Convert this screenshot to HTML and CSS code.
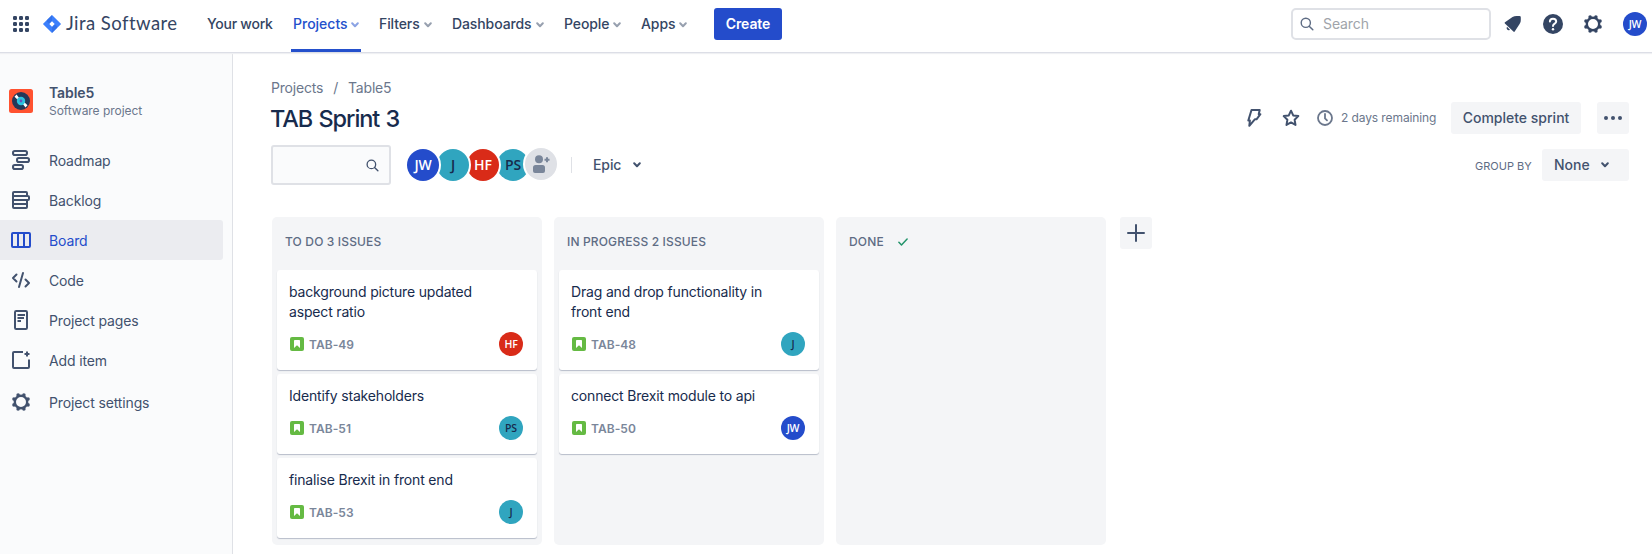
FILE: index.html
```html
<!DOCTYPE html>
<html lang="en">
<head>
<meta charset="utf-8">
<title>TAB Sprint 3 - Jira Software</title>
<link rel="stylesheet" href="styles.css">
</head>
<body>
<svg class="defs" width="0" height="0">
  <symbol id="chev" viewBox="0 0 8 6"><path d="M1.2 1.3 4 4.2l2.8-2.9" fill="none" stroke="currentColor" stroke-width="2" stroke-linecap="round" stroke-linejoin="round"/></symbol>
  <symbol id="lens" viewBox="0 0 14 14"><circle cx="5.8" cy="5.8" r="4.6" fill="none" stroke="currentColor" stroke-width="1.4"/><path d="m9.2 9.2 3.6 3.5" stroke="currentColor" stroke-width="1.5" stroke-linecap="round"/></symbol>
  <symbol id="gear" viewBox="0 0 18 18"><circle cx="9" cy="9" r="6.200" fill="none" stroke="currentColor" stroke-width="2.400"/><g fill="currentColor"><circle cx="6.100" cy="2" r="1.800"/><circle cx="11.900" cy="2" r="1.800"/><circle cx="16" cy="6.100" r="1.800"/><circle cx="16" cy="11.900" r="1.800"/><circle cx="11.900" cy="16" r="1.800"/><circle cx="6.100" cy="16" r="1.800"/><circle cx="2" cy="11.900" r="1.800"/><circle cx="2" cy="6.100" r="1.800"/></g></symbol>
  <symbol id="story" viewBox="0 0 14 14"><rect width="14" height="14" rx="2" fill="#65ba43"/><path d="M4 4.1c0-.6.4-1 1-1h4c.6 0 1 .4 1 1V11L7 8.2 4 11z" fill="#fff"/></symbol>
</svg>

<header class="topbar">
  <svg class="switcher" width="16" height="16" viewBox="0 0 16 16" fill="#344563"><rect width="4" height="4" rx="1.3"/><rect x="6" width="4" height="4" rx="1.3"/><rect x="12" width="4" height="4" rx="1.3"/><rect y="6" width="4" height="4" rx="1.3"/><rect x="6" y="6" width="4" height="4" rx="1.3"/><rect x="12" y="6" width="4" height="4" rx="1.3"/><rect y="12" width="4" height="4" rx="1.3"/><rect x="6" y="12" width="4" height="4" rx="1.3"/><rect x="12" y="12" width="4" height="4" rx="1.3"/></svg>
  <svg class="logo" width="18" height="18" viewBox="0 0 18 18"><path d="M9 0 17.6 8.4a.8.8 0 0 1 0 1.2L9 18 .4 9.6a.8.8 0 0 1 0-1.2z" fill="#3b7ffc"/><path d="M9 0v6L6.2 8.800 4 6.500Q3.500 5.400 4.500 4.400z" fill="#2c68e0" opacity=".6"/><path d="M9 18v-6l2.800-2.800L14 11.500Q14.500 12.600 13.500 13.600z" fill="#2c68e0" opacity=".6"/><path d="m9 6.300 2.700 2.700L9 11.700 6.300 9z" fill="#fff"/></svg>
  <span class="brand">Jira Software</span>
  <nav class="nav">
    <a class="nav-item w-work">Your work</a>
    <a class="nav-item active w-projects">Projects<svg class="chev"><use href="#chev"/></svg></a>
    <a class="nav-item w-filters">Filters<svg class="chev"><use href="#chev"/></svg></a>
    <a class="nav-item w-dash">Dashboards<svg class="chev"><use href="#chev"/></svg></a>
    <a class="nav-item w-people">People<svg class="chev"><use href="#chev"/></svg></a>
    <a class="nav-item w-apps">Apps<svg class="chev"><use href="#chev"/></svg></a>
  </nav>
  <button class="create">Create</button>
  <div class="search"><svg width="14" height="14"><use href="#lens"/></svg>Search</div>
  <svg class="bell" width="18" height="18" viewBox="0 0 18 18" fill="#344563"><path d="M1 7.200 8.500 2Q10.500.9 13 1h2.500q1.300 0 1.300 1.400V5q.1 2.200-1.200 4L10.700 16.500q-.6.800-1.300.1L.9 8.500q-.7-.7.1-1.300z"/><path d="M3 11.700 6 14.700q-1.600 1.100-2.800-.1-1.200-1.300-.2-2.900z"/></svg>
  <svg class="help" width="20" height="20" viewBox="0 0 20 20"><circle cx="10" cy="10" r="10" fill="#344563"/><path d="M6.900 7.600C6.900 5.700 8.200 4.700 10 4.700s3.200 1.100 3.200 2.800c0 2.300-3.200 2.100-3.200 4.600" fill="none" stroke="#fff" stroke-width="2" stroke-linecap="round"/><circle cx="10" cy="15.200" r="1.200" fill="#fff"/></svg>
  <svg class="gear" width="18" height="18"><use href="#gear"/></svg>
  <span class="avatar blue">JW</span>
</header>

<div class="layout">
  <aside class="sidebar">
    <div class="project">
      <svg width="24" height="24" viewBox="0 0 24 24"><rect width="24" height="24" rx="2.500" fill="#ff5230"/><circle cx="12" cy="12" r="9" fill="#253858"/><path d="m5.500 7.800 2-2.300 3.500 4.500-1.500 1.500zM18.500 16.200l-2 2.300L13 14l1.500-1.500z" fill="#fff"/><circle cx="12" cy="12" r="4.200" fill="#2cc3de"/><circle cx="12" cy="12" r="1.400" fill="#6554c0"/></svg>
      <div class="project-text"><strong>Table5</strong><span>Software project</span></div>
    </div>
    <nav class="menu">
      <a class="menu-item"><svg width="20" height="22" viewBox="0 0 20 22" fill="none" stroke="currentColor" stroke-width="2"><rect x="2" y="2" width="14" height="4" rx="1.800"/><rect x="6" y="9" width="12" height="4" rx="1.800"/><rect x="2" y="16" width="10" height="4" rx="1.800"/></svg>Roadmap</a>
      <a class="menu-item"><svg width="20" height="20" viewBox="0 0 20 20" fill="none" stroke="currentColor" stroke-width="2"><path d="M16 6V3q0-1-1-1H3Q2 2 2 3v14q0 1 1 1h12q1 0 1-1v-7M2 6h15q1 0 1 1v2q0 1-1 1H2V6zM2 14h14"/></svg>Backlog</a>
      <a class="menu-item selected"><svg width="20" height="20" viewBox="0 0 20 20" fill="none" stroke="currentColor" stroke-width="2"><rect x="1" y="3" width="18" height="14" rx="1"/><path d="M7 3v14M13 3v14"/></svg>Board</a>
      <a class="menu-item"><svg width="20" height="20" viewBox="0 0 20 20" fill="none" stroke="currentColor" stroke-width="2" stroke-linecap="round" stroke-linejoin="round"><path d="M5.500 4.500 2 8l3.500 3.500M14.500 9.500 18 13l-3.500 3.500M12 3 8 17" /></svg>Code</a>
      <a class="menu-item"><svg width="20" height="20" viewBox="0 0 20 20" fill="none" stroke="currentColor" stroke-width="2"><rect x="4" y="1" width="12" height="18" rx="1.200"/><path d="M6.500 5h7.500M6.500 8h6.500M6.500 11h3.500" stroke-width="1.900"/></svg>Project pages</a>
      <a class="menu-item"><svg width="20" height="20" viewBox="0 0 20 20" fill="none" stroke="currentColor" stroke-width="2"><path d="M12 2H3Q2 2 2 3v14q0 1 1 1h14q1 0 1-1V9.500M16 1.500v5M13.500 4h5"/></svg>Add item</a>
      <a class="menu-item settings"><svg width="20" height="20" viewBox="-1 -1 20 20"><use href="#gear" width="18" height="18"/></svg>Project settings</a>
    </nav>
  </aside>

  <main class="content">
    <div class="crumbs"><span>Projects</span><i>/</i><span>Table5</span></div>
    <div class="title-row">
      <h1>TAB Sprint 3</h1>
      <svg class="bolt" width="16" height="20" viewBox="0 0 16 20" fill="none" stroke="#42526e" stroke-width="2" stroke-linejoin="round"><path d="M5.500 2h8.200l-1 4.200h1.700L10.500 11.300H8.800L3.300 17.800l.6-5.300H2.300z"/></svg>
      <svg class="star" width="18" height="18" viewBox="0 0 18 18" fill="none" stroke="#42526e" stroke-width="2" stroke-linejoin="round"><path d="m9 1.700 2.200 4.700 5.100.7-3.700 3.600.9 5.200L9 13.400l-4.500 2.500.9-5.200-3.700-3.600 5.100-.7z"/></svg>
      <svg class="clock" width="16" height="16" viewBox="0 0 16 16" fill="none" stroke="#6b778c" stroke-width="1.800"><circle cx="8" cy="8" r="7"/><path d="M8 4v4.300l2 2" stroke-linecap="round"/></svg>
      <span class="remaining">2 days remaining</span>
      <button class="btn complete">Complete sprint</button>
      <button class="btn more"><svg width="18" height="4" viewBox="0 0 18 4" fill="#42526e"><circle cx="2" cy="2" r="2"/><circle cx="9" cy="2" r="2"/><circle cx="16" cy="2" r="2"/></svg></button>
    </div>
    <div class="filters">
      <div class="board-search"><svg width="13" height="13"><use href="#lens"/></svg></div>
      <div class="people">
        <span class="face f1"><span class="blue">JW</span></span><span class="face f2"><span class="teal">J</span></span><span class="face f3"><span class="red">HF</span></span><span class="face f4"><span class="teal">PS</span></span>
        <span class="face add"><span class="grey"><svg width="18" height="18" viewBox="0 0 18 18" fill="#7a869a"><circle cx="7" cy="4.200" r="4"/><path d="M1 12.500q0-2.500 2.500-2.500h7q2.500 0 2.500 2.500v3.500q0 2-2 2H3q-2 0-2-2z"/><path d="M15 2.200v5M12.500 4.700h5" stroke="#7a869a" stroke-width="2"/></svg></span></span>
      </div>
      <span class="divider"></span>
      <span class="epic">Epic<svg class="chev"><use href="#chev"/></svg></span>
      <span class="group-label">GROUP BY</span>
      <button class="btn none">None<svg class="chev"><use href="#chev"/></svg></button>
    </div>

    <div class="board">
      <section class="column">
        <h2>TO DO 3 ISSUES</h2>
        <article class="card"><p>background picture updated aspect ratio</p><footer><svg width="14" height="14"><use href="#story"/></svg><b>TAB-49</b><span class="avatar red">HF</span></footer></article>
        <article class="card"><p>Identify stakeholders</p><footer><svg width="14" height="14"><use href="#story"/></svg><b>TAB-51</b><span class="avatar teal">PS</span></footer></article>
        <article class="card"><p>finalise Brexit in front end</p><footer><svg width="14" height="14"><use href="#story"/></svg><b>TAB-53</b><span class="avatar teal">J</span></footer></article>
      </section>
      <section class="column">
        <h2>IN PROGRESS 2 ISSUES</h2>
        <article class="card"><p>Drag and drop functionality in front end</p><footer><svg width="14" height="14"><use href="#story"/></svg><b>TAB-48</b><span class="avatar teal">J</span></footer></article>
        <article class="card"><p>connect Brexit module to api</p><footer><svg width="14" height="14"><use href="#story"/></svg><b>TAB-50</b><span class="avatar blue">JW</span></footer></article>
      </section>
      <section class="column">
        <h2>DONE<svg width="10" height="8" viewBox="0 0 10 8" fill="none" stroke="#22936a" stroke-width="1.500" stroke-linecap="round" stroke-linejoin="round"><path d="m.9 4.200 2.600 2.700L9.100 1.100"/></svg></h2>
      </section>
      <button class="btn plus"><svg width="18" height="18" viewBox="0 0 18 18" stroke="#42526e" stroke-width="2" stroke-linecap="round"><path d="M9 1v16M1 9h16"/></svg></button>
    </div>
  </main>
</div>
</body>
</html>
```

FILE: styles.css
```css
* { box-sizing: border-box; }
body {
  margin: 0;
  height: 554px;
  overflow: hidden;
  display: flex;
  flex-direction: column;
  background: #fff;
  color: #42526e;
  font: 14px/20px Inter, "Liberation Sans", sans-serif;
  letter-spacing: -.1px;
}
svg { flex: none; display: block; }
.defs { position: absolute; }
button { border: 0; padding: 0; font: inherit; color: inherit; letter-spacing: inherit; }

.topbar {
  flex: none;
  height: 53px;
  display: flex;
  align-items: flex-start;
  border-bottom: 1px solid #dcdee6;
  box-shadow: 0 1px 1px #eff0f3;
  padding-left: 13px;
  position: relative;
}
.switcher { margin-top: 16px; }
.logo { margin: 15px 0 0 14px; }
.brand {
  width: 141px;
  margin-left: 5px;
  line-height: 46px;
  font-family: Lato, sans-serif;
  font-size: 18.5px;
  letter-spacing: .45px;
  color: #344563;
  white-space: nowrap;
}
.nav { display: flex; height: 52px; }
.nav-item {
  display: flex;
  align-items: center;
  padding-bottom: 4px;
  font-weight: 500;
  color: #344563;
  white-space: nowrap;
}
.chev { width: 8px; height: 6px; margin-left: auto; }
.nav-item .chev { color: #97a0af; margin-top: 2px; }
.nav-item.active { color: #2450cc; border-bottom: 3px solid #2450cc; padding: 0 2px 1px; }
.nav-item.active .chev { color: #8ba3e4; }
.w-work { width: 84px; letter-spacing: -.25px; }
.w-projects { width: 70px; letter-spacing: 0; }
.w-filters { width: 53px; margin-left: 18px; }
.w-dash { width: 92px; margin-left: 20px; }
.w-people { width: 57px; margin-left: 20px; }
.w-apps { width: 46px; margin-left: 20px; }
.create {
  width: 68px;
  height: 32px;
  margin: 8px 0 0 27px;
  border-radius: 3px;
  background: #244ccb;
  color: #fff;
  font-weight: 600;
}
.search {
  width: 200px;
  height: 32px;
  margin: 8px 0 0 auto;
  display: flex;
  align-items: center;
  gap: 9px;
  padding-left: 7px;
  border: 2px solid #dfe1e6;
  border-radius: 5px;
  color: #a0a4aa;
}
.search svg { color: #5e6c84; }
.bell { margin: 15px 0 0 13px; }
.help { margin: 14px 0 0 21px; }
.gear { margin: 15px 0 0 21px; color: #344563; }
.avatar {
  flex: none;
  width: 24px;
  height: 24px;
  border-radius: 50%;
  font: 600 10.5px/24px "Open Sans", sans-serif;
  text-align: center;
  letter-spacing: -.2px;
}
.topbar .avatar { margin: 12px 5px 0 21px; }
.blue { background: #244ccb; color: #fff; }
.red { background: #d92b18; color: #fff; }
.teal { background: #30a5bf; color: #172b4d; }
.grey { background: #dfe1e6; }

.layout { flex: 1; display: flex; min-height: 0; }
.sidebar {
  width: 233px;
  flex: none;
  background: #fafbfc;
  border-right: 1px solid #dfe1e6;
  padding-top: 30px;
}
.project { display: flex; align-items: center; gap: 16px; padding-left: 9px; height: 36px; margin-bottom: 21px; }
.project-text { display: flex; flex-direction: column; }
.project-text strong { font-weight: 600; line-height: 18px; }
.project-text span { font-size: 12px; line-height: 17px; color: #6b778c; letter-spacing: -.04px; }
.menu-item {
  height: 40px;
  width: 223px;
  display: flex;
  align-items: center;
  padding: 1px 0 0 49px;
  letter-spacing: -.13px;
}
.menu-item svg { width: 20px; margin: -2px 18px 0 -38px; }
.menu-item.selected { background: #ebecf0; color: #244ccb; border-radius: 0 3px 3px 0; }
.menu-item.settings { margin-top: 2px; }

.content { flex: 1; padding: 25px 23px 0 38px; }
.crumbs { display: flex; color: #6b778c; line-height: 20px; letter-spacing: -.2px; }
.crumbs i { font-style: normal; margin: 0 10px; }
.title-row { display: flex; align-items: center; height: 32px; margin-top: 4px; }
h1 { margin: 2px auto 0 -1px; font-size: 23.5px; line-height: 28px; font-weight: 550; letter-spacing: -1.05px; word-spacing: 1px; color: #172b4d; }
.bolt { margin-right: 20px; }
.star { margin-right: 17px; }
.clock { margin-right: 8px; }
.remaining { width: 110px; font-size: 12px; color: #6b778c; white-space: nowrap; }
.btn { background: #f4f5f7; border-radius: 3px; height: 32px; font-weight: 500; display: flex; align-items: center; justify-content: center; }
.complete { width: 130px; margin-right: 16px; letter-spacing: 0; }
.more { width: 32px; }
.filters { display: flex; align-items: center; height: 40px; margin-top: 11px; }
.board-search {
  width: 120px;
  height: 40px;
  border: 2px solid #dfe1e6;
  border-radius: 3px;
  background: #fafbfc;
  display: flex;
  align-items: center;
  justify-content: flex-end;
  padding-right: 10px;
}
.people { display: flex; margin-left: 14px; }
.face {
  position: relative;
  width: 36px;
  height: 36px;
  margin-right: -6px;
  padding: 2px;
  border-radius: 50%;
  background: #fff;
}
.face > span {
  display: flex;
  align-items: center;
  justify-content: center;
  width: 32px;
  height: 32px;
  border-radius: 50%;
  font: 600 14px/32px "Open Sans", sans-serif;
}
.f1 { z-index: 4; }
.f2 { z-index: 3; }
.f3 { z-index: 2; }
.f4 { z-index: 1; }
.face.add { z-index: 5; margin: -1px 0 0 -2px; }
.divider { width: 1px; height: 16px; background: #dfe1e6; margin-left: 12px; }
.epic { width: 48px; margin-left: 21px; display: flex; align-items: center; font-weight: 500; }
.group-label { margin-left: auto; font-size: 11px; width: 67px; white-space: nowrap; padding-top: 2px; color: #5e6c84; letter-spacing: 0; }
.none { width: 87px; padding: 0 20px 0 12px; letter-spacing: 0; }

.board { display: flex; align-items: flex-start; gap: 12px; margin-top: 32px; }
.column { width: 270px; height: 328px; background: #f4f5f7; border-radius: 5px; padding: 0 5px; margin-left: 1px; margin-right: -1px; }
.column h2 { margin: 0; height: 53px; padding: 15px 8px 0; display: flex; gap: 14px; font-size: 12px; line-height: 20px; font-weight: 500; color: #5e6c84; letter-spacing: .15px; }
.column h2 svg { margin-top: 6px; }
.card { background: #fff; border-radius: 3px; padding: 12px 14px 14px 12px; margin-bottom: 4px; box-shadow: 0 1px 1px #b7bdc9; color: #172b4d; letter-spacing: -.17px; }
.card p { margin: 0 30px 0 0; }
.card footer { display: flex; align-items: center; margin-top: 10px; padding-left: 1px; }
.card b { margin: 1px auto 0 5px; font-size: 12px; font-weight: 600; color: #7a869a; letter-spacing: .05px; }
.plus { width: 32px; margin-left: 3px; }
```
